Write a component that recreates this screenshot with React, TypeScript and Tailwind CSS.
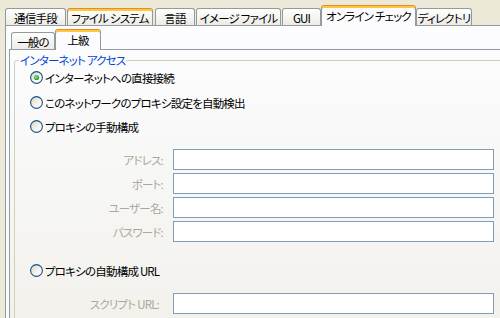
import React from "react";

const Radio = ({ checked, id }: { checked?: boolean; id: string }) => (
  <svg width="13" height="13" viewBox="0 0 13 13" className="shrink-0">
    <defs>
      <linearGradient id={`g${id}`} x1="0" y1="0" x2="1" y2="1">
        <stop offset="0" stopColor="#D6D3C6" />
        <stop offset="0.6" stopColor="#F6F5F1" />
        <stop offset="1" stopColor="#FFFFFF" />
      </linearGradient>
      <radialGradient id={`d${id}`} cx="0.4" cy="0.4" r="0.6">
        <stop offset="0" stopColor="#8CEB8C" />
        <stop offset="1" stopColor="#1E9A1E" />
      </radialGradient>
    </defs>
    <circle cx="6.5" cy="6.5" r="5.9" fill={`url(#g${id})`} stroke="#1C5180" strokeWidth="1.1" />
    {checked && <circle cx="6.5" cy="6.5" r="2.6" fill={`url(#d${id})`} />}
  </svg>
);

const Tab = ({
  label,
  w,
  ml,
  hot,
}: {
  label: string;
  w: string;
  ml: string;
  hot?: boolean;
}) => (
  <div
    className={`${w} ${ml} h-[17px] shrink-0 rounded-t-[3px] border border-b-0 border-[#919B9C] bg-gradient-to-b from-[#FFFFFF] to-[#ECEBE5] flex items-center justify-center text-black whitespace-nowrap ${
      hot ? "border-t-[#E68B2C] shadow-[inset_0_2px_0_#FFC73C]" : ""
    }`}
  >
    <span className="mt-[1px]">{label}</span>
  </div>
);

const SelTab = ({ label, w, ml }: { label: string; w: string; ml: string }) => (
  <div
    className={`${w} ${ml} h-[21px] shrink-0 mb-[-1px] relative z-10 rounded-t-[3px] border border-b-0 border-[#919B9C] border-t-[#E68B2C] shadow-[inset_0_2px_0_#FFC73C] bg-[#FCFCFE] flex items-start justify-center text-black whitespace-nowrap`}
  >
    <span className="mt-[3px]">{label}</span>
  </div>
);

const Field = ({ label, pr }: { label: string; pr?: string }) => (
  <div className="flex items-center">
    <div className={`w-[133px] text-right text-[#ACA899] whitespace-nowrap ${pr ?? ""}`}>{label}</div>
    <div className="ml-[10px] w-[321px] h-[21px] border border-[#7F9DB9] bg-white" />
  </div>
);

export default function App() {
  return (
    <div className="w-[500px] h-[318px] overflow-hidden bg-[#ECE9D8] text-[11.5px] leading-[14px] tracking-[-0.8px] font-['Noto_Sans_CJK_JP',sans-serif] [font-feature-settings:'palt']">
      {/* outer tabs */}
      <div className="flex items-end h-[25px]">
        <Tab label="通信手段" w="w-[61px]" ml="ml-[5px]" />
        <Tab label="ファイル システム" w="w-[86px]" ml="ml-[1px]" hot />
        <Tab label="言語" w="w-[40px]" ml="ml-[2px]" />
        <Tab label="イメージ ファイル" w="w-[85px]" ml="ml-[1px]" />
        <Tab label="GUI" w="w-[39px]" ml="ml-[1px]" />
        <SelTab label="オンライン チェック" w="w-[95px]" ml="ml-[0px]" />
        <Tab label="ディレクトリ" w="w-[56px]" ml="ml-[0px]" />
      </div>
      {/* outer panel */}
      <div className="ml-[5px] h-[293px] w-[520px] border-l border-t border-[#919B9C] bg-[#FCFCFE] pl-[3px]">
        {/* inner tabs */}
        <div className="flex items-end h-[23px]">
          <Tab label="一般の" w="w-[44px]" ml="ml-[2px]" />
          <SelTab label="上級" w="w-[46px]" ml="ml-[0px]" />
        </div>
        {/* inner panel */}
        <div className="h-[300px] w-[520px] border-l border-t border-[#919B9C] bg-gradient-to-b from-[#FCFCFE] to-[#F1F0EA] pl-[4px] pt-[10px]">
          <div className="relative w-[560px] h-[300px] rounded-[3px] border border-[#D0D0BF] pl-[15px] pt-[10px]">
            <div className="absolute left-[4px] top-[-8px] px-[1px] bg-[#FBFBFB] text-[#0046D5] whitespace-nowrap">
              インターネット アクセス
            </div>
            <div className="flex items-center h-[13px]">
              <Radio checked id="r1" />
              <span className="ml-[2px] text-black whitespace-nowrap">インターネットへの直接接続</span>
            </div>
            <div className="flex items-center h-[13px] mt-[12px]">
              <Radio id="r2" />
              <span className="ml-[2px] text-black whitespace-nowrap">このネットワークのプロキシ設定を自動検出</span>
            </div>
            <div className="flex items-center h-[13px] mt-[11px]">
              <Radio id="r3" />
              <span className="ml-[2px] text-black whitespace-nowrap">プロキシの手動構成</span>
            </div>
            <div className="mt-[16px] flex flex-col gap-[3px]">
              <Field label="アドレス:" />
              <Field label="ポート:" />
              <Field label="ユーザー名:" />
              <Field label="パスワード:" />
            </div>
            <div className="flex items-center h-[13px] mt-[22px]">
              <Radio id="r4" />
              <span className="ml-[2px] text-black whitespace-nowrap">プロキシの自動構成 URL</span>
            </div>
            <div className="mt-[16px]">
              <Field label="スクリプト URL:" pr="pr-[4px]" />
            </div>
          </div>
        </div>
      </div>
    </div>
  );
}
